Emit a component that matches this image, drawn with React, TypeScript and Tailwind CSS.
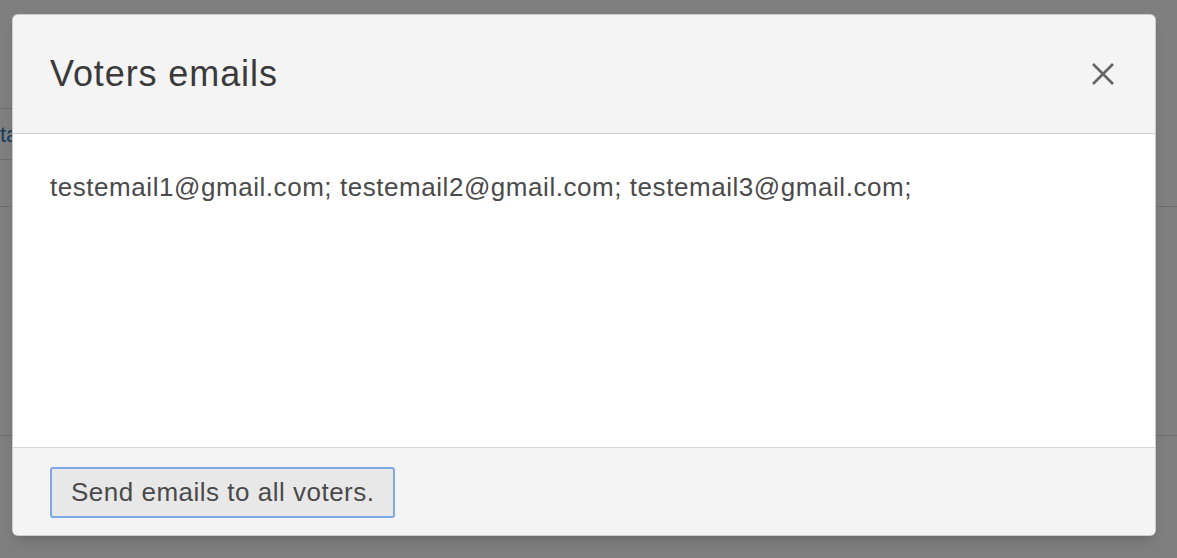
import React from 'react';

const emails = ['testemail1@gmail.com', 'testemail2@gmail.com', 'testemail3@gmail.com'];

const CloseIcon = () => (
  <svg width="24" height="24" viewBox="0 0 24 24" fill="none" stroke="#666" strokeWidth="2.6" strokeLinecap="butt">
    <path d="M2 2 L22 22" />
    <path d="M22 2 L2 22" />
  </svg>
);

const App = () => {
  return (
    <div className="relative h-[558px] w-full overflow-hidden bg-white font-['Liberation_Sans',Arial,sans-serif]">
      {/* page behind the modal */}
      <div className="pt-[108px]">
        <div className="flex h-[52px] w-[600px] items-center border-y border-[#d8d8d8]">
          <span className="text-[22px] text-[#337ab7]">ta</span>
        </div>
        <div className="mt-[46px] h-[230px] border-y border-[#d8d8d8]" />
      </div>

      {/* overlay */}
      <div className="absolute inset-0 bg-black/50" />

      {/* modal */}
      <div className="absolute left-[12px] top-[14px] flex h-[522px] w-[1144px] flex-col overflow-hidden rounded-[6px] border border-black/20 bg-white shadow-lg">
        <div className="flex h-[119px] shrink-0 items-center justify-between border-b border-[#cfcfcf] bg-[#f4f4f4] pl-[37px] pr-[40px]">
          <h2 className="text-[36px] leading-[40px] tracking-[0.9px] text-[#3a3a3a]">Voters emails</h2>
          <button className="flex h-[24px] w-[24px] items-center justify-center">
            <CloseIcon />
          </button>
        </div>
        <div className="flex-1 bg-white pl-[37px] pt-[35px]">
          <p className="text-[26px] leading-[37px] tracking-[0.55px] text-[#4a4a4a]">
            {emails.map(e => `${e}; `).join('').trim()}
          </p>
        </div>
        <div className="flex h-[88px] shrink-0 items-start border-t border-[#d6d6d6] bg-[#f4f4f4] pl-[37px] pt-[19px]">
          <button className="h-[51px] rounded-[3px] border-2 border-[#7fa9e6] bg-[#e8e8e8] px-[19px] text-[26px] tracking-[0.5px] text-[#4a4a4a]">
            Send emails to all voters.
          </button>
        </div>
      </div>
    </div>
  );
};

export default App;
